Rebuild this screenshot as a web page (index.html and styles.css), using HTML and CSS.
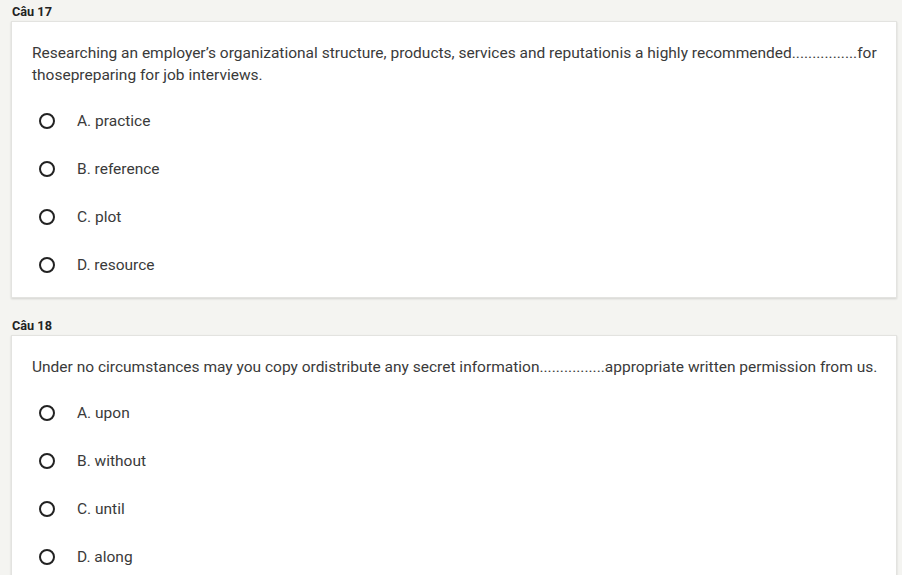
FILE: index.html
```html
<!DOCTYPE html>
<html>
<head>
<meta charset="utf-8">
<link rel="stylesheet" href="styles.css">
</head>
<body>
<div class="page">
  <section class="q">
    <div class="q-label">Câu 17</div>
    <div class="card">
      <p class="q-text">Researching an employer’s organizational structure, products, services and reputationis a highly recommended................for thosepreparing for job interviews.</p>
      <ul class="opts">
        <li class="opt"><span class="radio"></span><span>A. practice</span></li>
        <li class="opt"><span class="radio"></span><span>B. reference</span></li>
        <li class="opt"><span class="radio"></span><span>C. plot</span></li>
        <li class="opt"><span class="radio"></span><span>D. resource</span></li>
      </ul>
    </div>
  </section>
  <section class="q">
    <div class="q-label">Câu 18</div>
    <div class="card">
      <p class="q-text">Under no circumstances may you copy ordistribute any secret information................appropriate written permission from us.</p>
      <ul class="opts">
        <li class="opt"><span class="radio"></span><span>A. upon</span></li>
        <li class="opt"><span class="radio"></span><span>B. without</span></li>
        <li class="opt"><span class="radio"></span><span>C. until</span></li>
        <li class="opt"><span class="radio"></span><span>D. along</span></li>
      </ul>
    </div>
  </section>
</div>
</body>
</html>
```
FILE: styles.css
```css
html, body {
  margin: 0;
  padding: 0;
  background: #f4f4f1;
  font-family: Roboto, "Liberation Sans", sans-serif;
  overflow: hidden;
}
.page {
  padding: 0 5px 0 11px;
}
.q + .q {
  margin-top: 16px;
}
.q-label {
  padding-top: 5px;
  line-height: 14px;
  height: 14px;
  font-size: 12.7px;
  font-weight: 700;
  color: #222;
  margin-bottom: 2px;
  padding-left: 1px;
}
.card {
  background: #fff;
  border: 1px solid #e3e3e0;
  box-shadow: 0 1px 2px rgba(0,0,0,0.14);
  padding: 20px 4px 8px 20px;
}
.q-text {
  margin: 0;
  font-size: 15.5px;
  line-height: 22px;
  color: #3a3a3a;
}
.opts {
  list-style: none;
  margin: 11px 0 0 0;
  padding: 0;
}
.opt {
  display: flex;
  align-items: center;
  height: 48px;
  font-size: 15.5px;
  color: #3a3a3a;
}
.radio {
  box-sizing: border-box;
  width: 16px;
  height: 16px;
  border: 2px solid #222;
  border-radius: 50%;
  margin-left: 7px;
  margin-right: 22px;
  flex: none;
}
```
